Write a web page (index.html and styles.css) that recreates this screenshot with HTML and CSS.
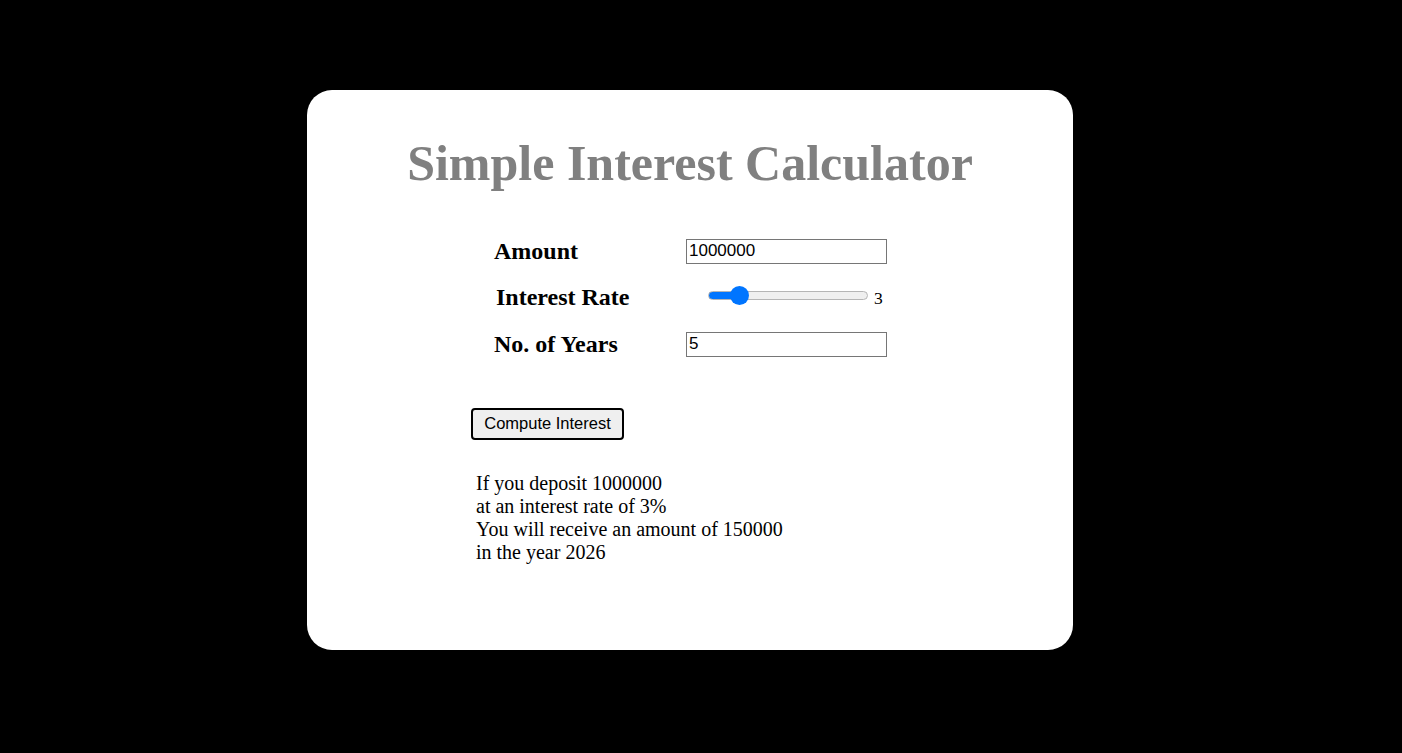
FILE: index.html
```html
<!DOCTYPE html>
<html>
<head>
<meta charset="utf-8">
<link rel="stylesheet" href="styles.css">
</head>
<body>
<div class="card">
  <h1 class="title">Simple Interest Calculator</h1>
  <div class="form">
    <div class="row">
      <label class="label">Amount</label>
      <input class="field" type="number" value="1000000">
    </div>
    <div class="row">
      <label class="label label-rate">Interest Rate</label>
      <div class="rate">
        <input class="slider" type="range" min="0" max="20" value="3">
        <span class="rate-val">3</span>
      </div>
    </div>
    <div class="row row-years">
      <label class="label">No. of Years</label>
      <input class="field" type="number" value="5">
    </div>
  </div>
  <button class="btn">Compute Interest</button>
  <div class="result">
    If you deposit 1000000<br>
    at an interest rate of 3%<br>
    You will receive an amount of 150000<br>
    in the year 2026
  </div>
</div>
</body>
</html>
```

FILE: styles.css
```css
html, body {
  margin: 0;
  padding: 0;
  background: #000;
  font-family: "Liberation Serif", "Times New Roman", serif;
}
body {
  height: 753px;
  overflow: hidden;
}
.card {
  box-sizing: border-box;
  width: 766px;
  height: 560px;
  margin: 90px 0 0 307px;
  background: #fff;
  border-radius: 25px;
  padding-top: 45px;
}
.title {
  margin: 0;
  text-align: center;
  font-size: 50px;
  font-weight: bold;
  color: #808080;
  line-height: 1.15;
}
.form {
  margin: 45px 0 0 187px;
  display: flex;
  flex-direction: column;
  gap: 20px;
}
.row {
  display: grid;
  grid-template-columns: 192px auto;
  align-items: center;
  height: 26px;
}
.row-years { margin-top: 1px; }
.label {
  font-size: 24px;
  font-weight: bold;
  color: #000;
}
.label-rate { margin-left: 2px; }
.field {
  box-sizing: border-box;
  width: 201px;
  height: 25px;
  font-family: "Liberation Sans", Arial, sans-serif;
  font-size: 17px;
  padding: 1px 2px;
  border: 1px solid #767676;
  border-radius: 0;
  margin: 0;
}
.field::-webkit-inner-spin-button,
.field::-webkit-outer-spin-button { -webkit-appearance: none; margin: 0; }
.rate {
  display: flex;
  align-items: center;
  margin-top: -4px;
}
.slider {
  -webkit-appearance: none;
  appearance: none;
  width: 160px;
  height: 20px;
  margin: 0 6px 0 22px;
  background: transparent;
}
.slider::-webkit-slider-runnable-track {
  box-sizing: border-box;
  height: 9px;
  border-radius: 5px;
  border: 1px solid #b5b5b5;
  background: linear-gradient(to right, #0075ff 0 30px, #efefef 30px);
}
.slider::-webkit-slider-thumb {
  -webkit-appearance: none;
  appearance: none;
  width: 19px;
  height: 19px;
  border-radius: 50%;
  background: #0075ff;
  border: none;
  margin-top: -6px;
}
.rate-val {
  font-size: 17.5px;
  margin-top: 7px;
}
.btn {
  display: block;
  margin: 51px 0 0 164px;
  width: 153px;
  height: 32px;
  font-family: "Liberation Sans", Arial, sans-serif;
  font-size: 16.5px;
  background: #efefef;
  border: 2px solid #000;
  border-radius: 4px;
  color: #000;
  padding: 0;
}
.result {
  margin: 32px 0 0 169px;
  font-size: 20px;
  line-height: 23px;
  color: #000;
}
```
